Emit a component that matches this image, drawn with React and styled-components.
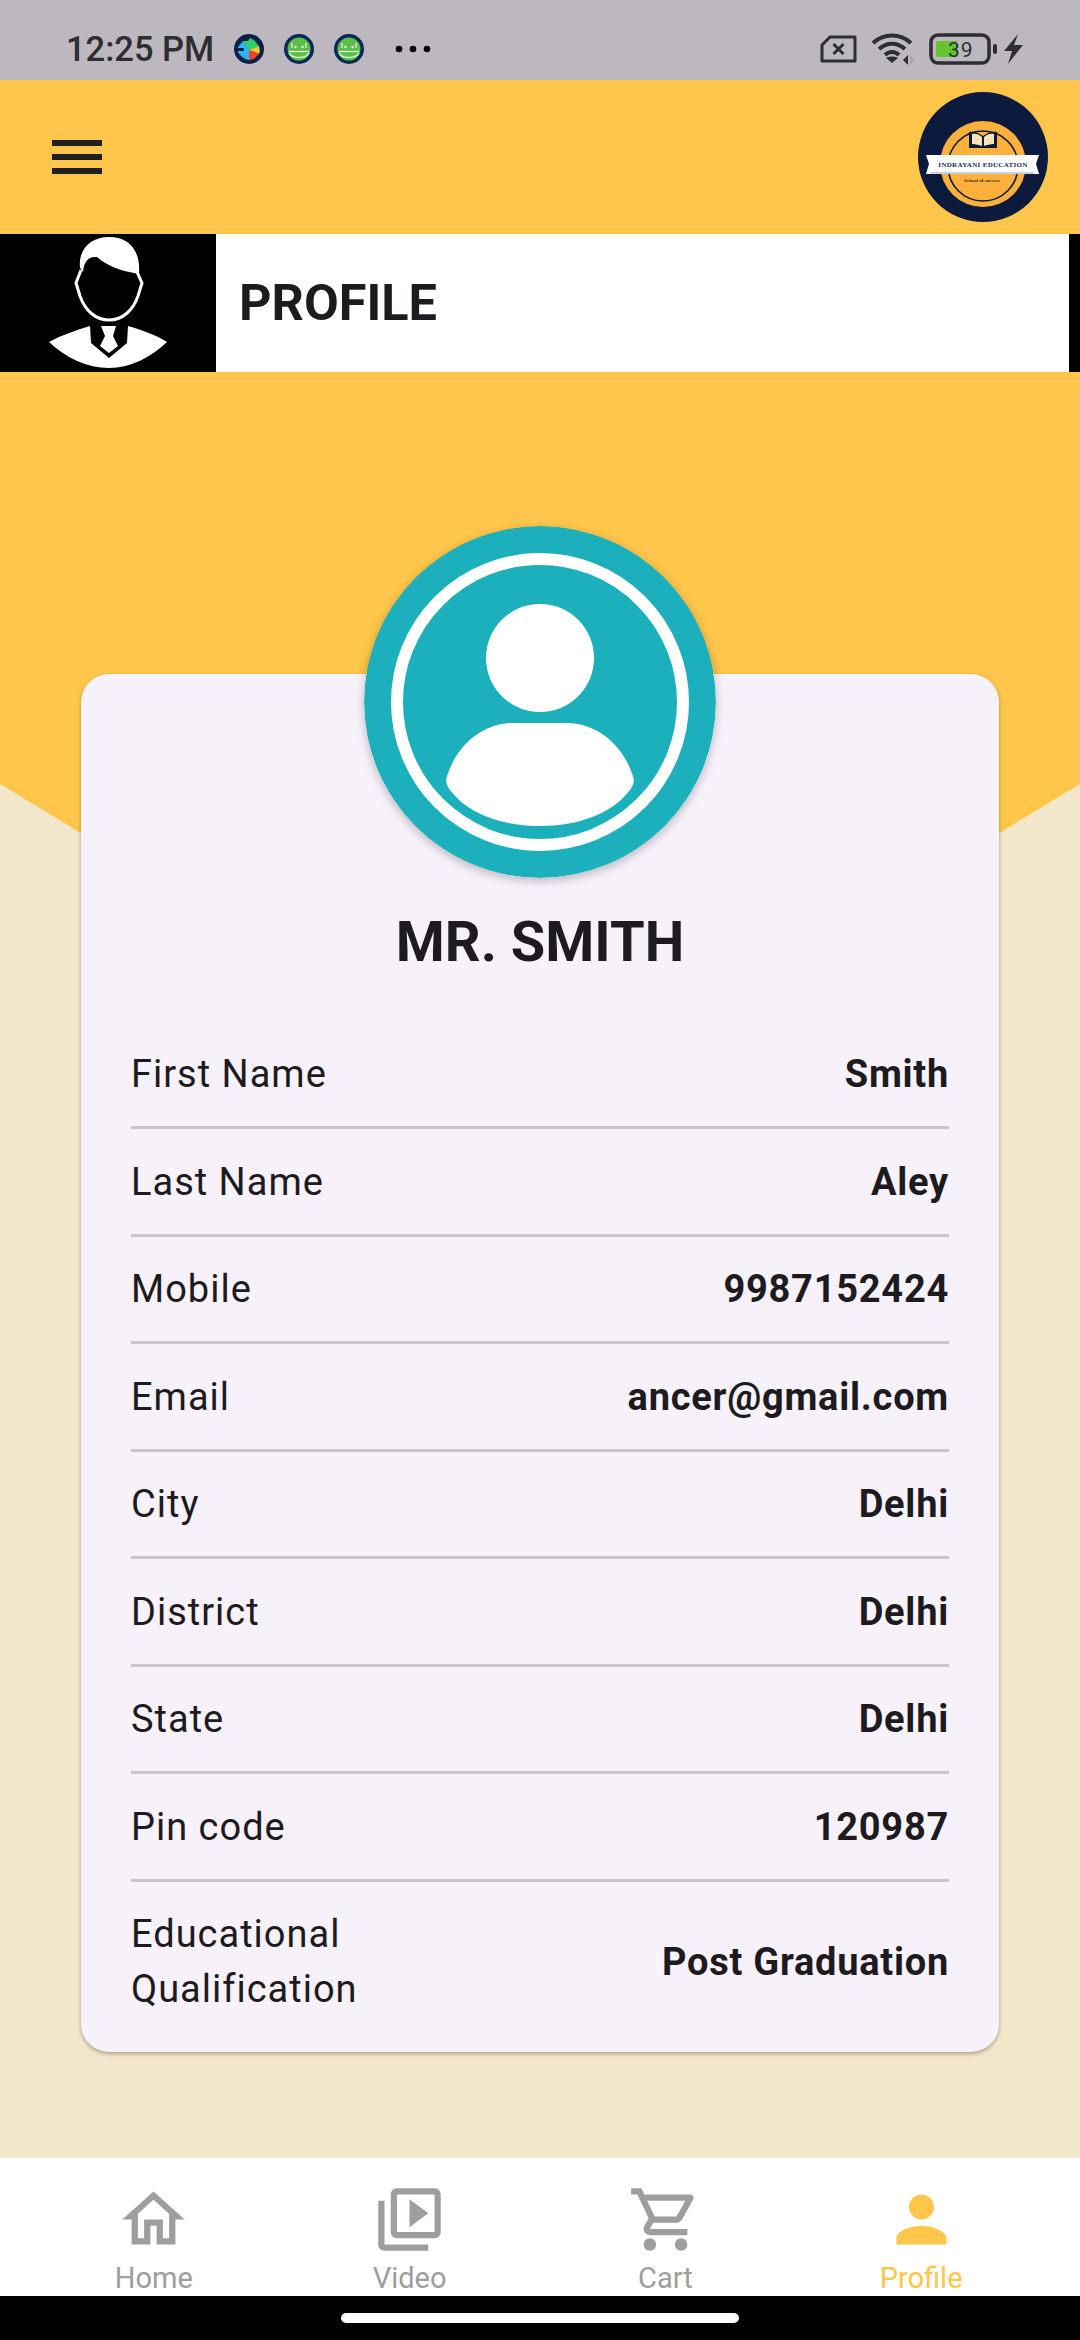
import { createGlobalStyle } from "styled-components";
import styled from "styled-components";
import { MdOutlineHome, MdOutlineVideoLibrary, MdOutlineShoppingCart, MdPerson } from "react-icons/md";

const GlobalStyle = createGlobalStyle`
  html, body {
    margin: 0;
    padding: 0;
    background: #000;
  }
  * {
    box-sizing: border-box;
  }
`;

const Page = styled.div`
  width: 1080px;
  height: 2340px;
  display: flex;
  flex-direction: column;
  font-family: Roboto, "Liberation Sans", sans-serif;
  color: #1d1b20;
  overflow: hidden;
`;

const StatusBar = styled.div`
  height: 80px;
  flex: none;
  background: #bdb8bf;
  display: flex;
  align-items: center;
  justify-content: space-between;
  padding: 18px 56px 0 66px;
`;

const StatusGroup = styled.div`
  display: flex;
  align-items: center;
  gap: ${({ $gap }) => $gap}px;
`;

const Time = styled.span`
  font-size: 34.5px;
  font-weight: 500;
  color: #2e2d30;
`;

const Header = styled.header`
  height: 154px;
  flex: none;
  background: #ffc64b;
  display: flex;
  align-items: center;
  justify-content: space-between;
  padding: 0 31px 0 52px;
`;

const Burger = styled.div`
  width: 50px;
  display: flex;
  flex-direction: column;
  gap: 8px;
`;

const BurgerLine = styled.span`
  height: 6px;
  background: #231f20;
`;

const Banner = styled.div`
  height: 138px;
  flex: none;
  background: #fff;
  display: flex;
  align-items: center;
  justify-content: space-between;
`;

const BannerPic = styled.div`
  width: 216px;
  height: 100%;
  background: #000;
`;

const BannerTitle = styled.h1`
  flex: 1;
  margin: 0 0 2px 23px;
  font-size: 50.5px;
  font-weight: 700;
`;

const BannerEnd = styled.div`
  width: 11px;
  height: 100%;
  background: #000;
`;

const Main = styled.main`
  position: relative;
  flex: 1;
  background: #f3e7cb;
  padding: 302px 81px 0;
`;

const YellowShape = styled.div`
  position: absolute;
  inset: 0 0 auto 0;
  height: 740px;
  background: #ffc64b;
  clip-path: polygon(0 0, 100% 0, 100% 412px, 50% 100%, 0 412px);
`;

const Card = styled.section`
  position: relative;
  height: 1378px;
  background: #f7f2fa;
  border-radius: 28px;
  box-shadow: 0 2px 4px rgba(0, 0, 0, 0.3);
  padding: 0 50px;
  display: flex;
  flex-direction: column;
`;

const Avatar = styled.svg`
  display: block;
  width: 352px;
  height: 352px;
  margin: -148px auto 0;
  flex: none;
  border-radius: 50%;
  box-shadow: 0 3px 10px rgba(0, 0, 0, 0.25);
`;

const Name = styled.h2`
  margin: 31px 0 46.5px;
  text-align: center;
  font-size: 56px;
  line-height: 66px;
  font-weight: 700;
`;

const Row = styled.div`
  display: flex;
  align-items: center;
  justify-content: space-between;
  padding: 25.5px 0 24px;
  border-bottom: ${({ $last }) => ($last ? "none" : "3px solid #cac4d0")};
`;

const Label = styled.span`
  font-size: 38px;
  line-height: 55px;
  letter-spacing: 1px;
  max-width: 340px;
`;

const Value = styled.span`
  font-size: 38px;
  line-height: 55px;
  font-weight: 700;
  letter-spacing: 0.75px;
`;

const BottomNav = styled.nav`
  height: 138px;
  flex: none;
  background: #fff;
  display: grid;
  grid-template-columns: repeat(4, 1fr);
  padding: 24px 31px 0 26px;
`;

const NavItem = styled.div`
  display: flex;
  flex-direction: column;
  align-items: center;
  color: ${({ $active }) => ($active ? "#ffc64b" : "#9e9e9e")};
  font-size: 29px;
  line-height: 36px;
  svg {
    display: block;
    width: 75px;
    height: 75px;
    margin-bottom: 3px;
  }
`;

const GestureBar = styled.div`
  height: 44px;
  flex: none;
  background: #000;
  display: flex;
  justify-content: center;
  padding-top: 17px;
`;

const GesturePill = styled.div`
  width: 398px;
  height: 10px;
  border-radius: 5px;
  background: #fff;
`;

const DotsSvg = styled.svg`
  margin-left: 11px;
`;

const BatteryText = styled.text`
  font-family: Roboto, sans-serif;
  font-size: 21px;
  letter-spacing: 1px;
  fill: #2e2d30;
`;

const LogoTitle = styled.text`
  font-family: "Liberation Serif", serif;
  font-size: 7px;
  font-weight: 700;
  fill: #1c2a55;
  text-anchor: middle;
  letter-spacing: 0.3px;
`;

const LogoSub = styled.text`
  font-family: "Liberation Serif", serif;
  font-size: 5px;
  font-weight: 700;
  fill: #4a3310;
  text-anchor: middle;
`;

const rows = [
  ["First Name", "Smith"],
  ["Last Name", "Aley"],
  ["Mobile", "9987152424"],
  ["Email", "ancer@gmail.com"],
  ["City", "Delhi"],
  ["District", "Delhi"],
  ["State", "Delhi"],
  ["Pin code", "120987"],
  ["Educational Qualification", "Post Graduation"],
];

const navItems = [
  ["Home", MdOutlineHome],
  ["Video", MdOutlineVideoLibrary],
  ["Cart", MdOutlineShoppingCart],
  ["Profile", MdPerson],
];

const PlayBadge = () => (
  <svg width="30" height="30" viewBox="0 0 30 30">
    <circle cx="15" cy="15" r="15" fill="#0a1f4a" />
    <path d="M9 7 L14 7 L16 4 L20 6 L25 12 L15 17 Z" fill="#2fd06a" />
    <path d="M25 12 C26 15 26 18 25 20 L15 16 Z" fill="#f7c52b" />
    <path d="M15 16 L25 20 L20 25 L15 26 Z" fill="#ea4335" />
    <path d="M4 13 L9 7 L15 16 L15 26 C10 25 6 22 4 18 Z" fill="#29b6f6" />
    <path d="M3 14 H10 V17 H3 Z" fill="#0a1f4a" />
  </svg>
);

const AndroidBadge = () => (
  <svg width="30" height="30" viewBox="0 0 30 30">
    <circle cx="15" cy="15" r="15" fill="#0a2a55" />
    <circle cx="15" cy="15" r="11.5" fill="#5cbf4a" />
    <path d="M5 19 C8 25 22 25 25 19" fill="none" stroke="#eef7e8" strokeWidth="1.3" />
    <path d="M5 17.5 H25" stroke="#eef7e8" strokeWidth="1.2" />
    <path d="M8 9 V14 M22 9 V14" stroke="#eef7e8" strokeWidth="1.2" />
    <circle cx="11.5" cy="13" r="1.2" fill="#eef7e8" />
    <circle cx="18.5" cy="13" r="1.2" fill="#eef7e8" />
  </svg>
);

const Dots = () => (
  <DotsSvg width="36" height="8" viewBox="0 0 36 8">
    <circle cx="4" cy="4" r="3.3" fill="#000" />
    <circle cx="18" cy="4" r="3.3" fill="#000" />
    <circle cx="32" cy="4" r="3.3" fill="#000" />
  </DotsSvg>
);

const SimIcon = () => (
  <svg width="37" height="28" viewBox="0 0 37 28">
    <path d="M10 2 H35 V26 H2 V10 Z" fill="none" stroke="#2e2d30" strokeWidth="3" strokeLinejoin="round" />
    <path d="M13.5 9 L23.5 19 M23.5 9 L13.5 19" stroke="#2e2d30" strokeWidth="3" />
  </svg>
);

const WifiIcon = () => (
  <svg width="44" height="32" viewBox="0 0 44 32">
    <path d="M2 10 C13 0 29 0 40 10" fill="none" stroke="#2e2d30" strokeWidth="4" />
    <path d="M8 16 C16 9 26 9 34 16" fill="none" stroke="#2e2d30" strokeWidth="4" />
    <path d="M14 22 C18 18 24 18 28 22" fill="none" stroke="#2e2d30" strokeWidth="4" />
    <path d="M21 30 L15 25 C18 23 24 23 27 25 Z" fill="#2e2d30" />
    <path d="M37 22 V32 L32 27 Z" fill="#2e2d30" />
    <path d="M39 22 V32 L44 27 Z" fill="#a9a5ab" />
  </svg>
);

const BatteryIcon = () => (
  <svg width="68" height="32" viewBox="0 0 68 32">
    <rect x="2" y="2" width="58" height="28" rx="7" fill="none" stroke="#2e2d30" strokeWidth="3.5" />
    <path d="M9 8 H28 V24 H9 Q7 24 7 22 V10 Q7 8 9 8 Z" fill="#62c52c" />
    <BatteryText x="19" y="24">39</BatteryText>
    <rect x="64" y="11" width="4" height="10" rx="2" fill="#2e2d30" />
  </svg>
);

const BoltIcon = () => (
  <svg width="20" height="30" viewBox="0 0 20 30">
    <path d="M14 0 L0 17 H8 L4 30 L19 11 H10 Z" fill="#2e2d30" />
  </svg>
);

const Logo = () => (
  <svg width="132" height="132" viewBox="0 0 132 132">
    <circle cx="66" cy="66" r="65" fill="#0c1a3e" />
    <circle cx="66" cy="73" r="43" fill="#fdb03b" />
    <circle cx="66" cy="75" r="35" fill="none" stroke="#0c1a3e" strokeWidth="1.6" />
    <path d="M66 45 C61 41 56 40 52 41 V57 H80 V41 C76 40 71 41 66 45 Z" fill="#0c1a3e" />
    <path d="M65 46 C62 43 58 42 55 43 V53 C59 53 62 54 65 55 Z M67 46 C70 43 74 42 77 43 V53 C73 53 70 54 67 55 Z" fill="#f7e3b6" />
    <path d="M9 64 H122 L119 73 L122 83 H9 L12 73 Z" fill="#fff" />
    <path d="M14 82 H117" stroke="#9aa3b8" strokeWidth="1.2" />
    <LogoTitle x="66" y="76">INDRAYANI EDUCATION</LogoTitle>
    <LogoSub x="65" y="91">School of success</LogoSub>
  </svg>
);

const ManIcon = () => (
  <svg width="216" height="138" viewBox="0 234 216 138">
    <path d="M80 268 C78 248 92 237 109 237 C127 237 141 248 139 274 L134 273 C122 271 107 266 97 257 C88 256 84 262 83 272 Z" fill="#fff" />
    <path d="M81 270 L76 283 L80 296 C85 310 95 320 109 320 C123 320 133 310 138 296 L142 283 L137 272" fill="none" stroke="#fff" strokeWidth="3" />
    <path d="M49 342 C62 335 76 330 90 326 L91 343 L109 358 L127 343 L128 326 C142 330 156 335 167 342 C150 358 130 368 109 368 C87 368 66 358 49 342 Z" fill="#fff" />
    <path d="M101 326 H116 L113 336 L118 346 L109 353 L100 346 L105 336 Z" fill="#fff" />
  </svg>
);

const AvatarArt = () => (
  <Avatar viewBox="0 0 352 352">
    <circle cx="176" cy="176" r="176" fill="#1cafbc" />
    <circle cx="176" cy="176" r="143" fill="none" stroke="#fff" strokeWidth="12" />
    <circle cx="176" cy="132" r="54" fill="#fff" />
    <path d="M83 250 C92 222 116 197 150 197 H202 C236 197 260 222 269 250 C271 256 269 260 266 264 C248 288 214 300 176 300 C138 300 104 288 86 264 C83 260 81 256 83 250 Z" fill="#fff" />
  </Avatar>
);

export default function App() {
  return (
    <Page>
      <GlobalStyle />
      <StatusBar>
        <StatusGroup $gap={20}>
          <Time>12:25 PM</Time>
          <PlayBadge />
          <AndroidBadge />
          <AndroidBadge />
          <Dots />
        </StatusGroup>
        <StatusGroup $gap={14}>
          <SimIcon />
          <WifiIcon />
          <StatusGroup $gap={7}>
            <BatteryIcon />
            <BoltIcon />
          </StatusGroup>
        </StatusGroup>
      </StatusBar>
      <Header>
        <Burger>
          <BurgerLine />
          <BurgerLine />
          <BurgerLine />
        </Burger>
        <Logo />
      </Header>
      <Banner>
        <BannerPic>
          <ManIcon />
        </BannerPic>
        <BannerTitle>PROFILE</BannerTitle>
        <BannerEnd />
      </Banner>
      <Main>
        <YellowShape />
        <Card>
          <AvatarArt />
          <Name>MR. SMITH</Name>
          {rows.map(([label, value], i) => (
            <Row key={label} $last={i === rows.length - 1}>
              <Label>{label}</Label>
              <Value>{value}</Value>
            </Row>
          ))}
        </Card>
      </Main>
      <BottomNav>
        {navItems.map(([label, Icon]) => (
          <NavItem key={label} $active={label === "Profile"}>
            <Icon />
            {label}
          </NavItem>
        ))}
      </BottomNav>
      <GestureBar>
        <GesturePill />
      </GestureBar>
    </Page>
  );
}
